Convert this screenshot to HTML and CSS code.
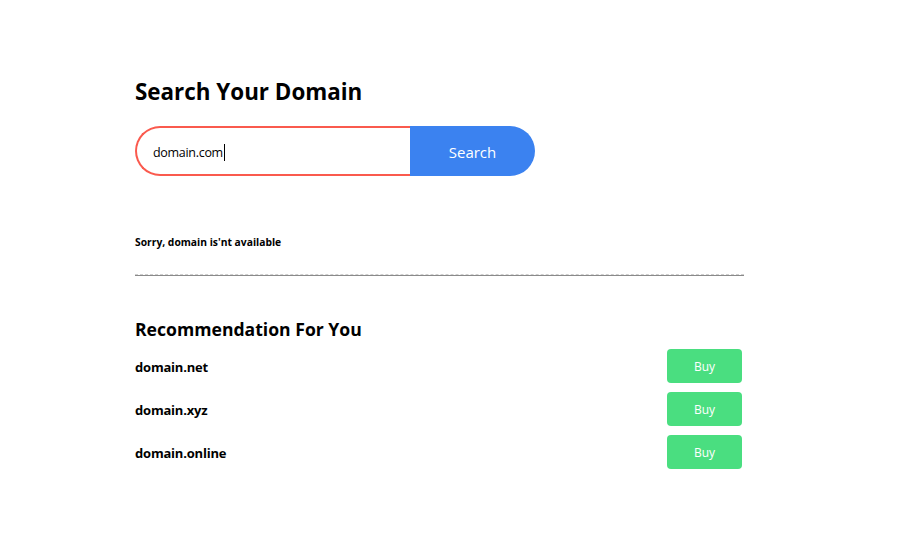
FILE: index.html
```html
<!DOCTYPE html>
<html>
<head>
<meta charset="utf-8">
<link rel="stylesheet" href="styles.css">
</head>
<body>
<main class="container">
  <h1 class="title">Search Your Domain</h1>
  <form class="search">
    <div class="search-input">domain.com<span class="caret"></span></div>
    <button type="button" class="search-btn">Search</button>
  </form>
  <p class="status">Sorry, domain is'nt available</p>
  <hr class="divider">
  <h2 class="subtitle">Recommendation For You</h2>
  <ul class="list">
    <li class="row"><span class="name">domain.net</span><button type="button" class="buy">Buy</button></li>
    <li class="row"><span class="name">domain.xyz</span><button type="button" class="buy">Buy</button></li>
    <li class="row"><span class="name">domain.online</span><button type="button" class="buy">Buy</button></li>
  </ul>
</main>
</body>
</html>
```
FILE: styles.css
```css
* { box-sizing: border-box; }
body {
  margin: 0;
  background: #fff;
  font-family: "Open Sans", "Noto Sans", sans-serif;
  color: #000;
}
.container {
  width: 609px;
  margin-left: 135px;
  padding-top: 77px;
}
.title {
  margin: 0;
  font-size: 22.4px;
  font-weight: 700;
  line-height: 30px;
}
.search {
  display: flex;
  margin-top: 19px;
  width: 400px;
  height: 50px;
}
.search-input {
  width: 275px;
  height: 50px;
  border: 2px solid #fa5a4e;
  border-right: none;
  border-radius: 25px 0 0 25px;
  padding-left: 16px;
  padding-top: 2px;
  display: flex;
  align-items: center;
  font-size: 12.5px;
  letter-spacing: -0.3px;
}
.caret {
  display: inline-block;
  width: 1px;
  height: 17px;
  background: #000;
  margin-left: 1px;
}
.search-btn {
  width: 125px;
  height: 50px;
  border: none;
  background: #3b82f0;
  color: #fff;
  border-radius: 0 25px 25px 0;
  font-family: inherit;
  font-size: 15px;
  padding: 2px 0 0 0;
}
.status {
  margin: 59px 0 0;
  font-size: 10.3px;
  font-weight: 700;
  line-height: 14px;
}
.divider {
  margin: 25px 0 0;
  border: none;
  border-top: 1px dashed #cfcfcf;
  border-bottom: 1px solid #8a8a8a;
  height: 0;
}
.subtitle {
  margin: 41px 0 0;
  font-size: 17.6px;
  font-weight: 700;
  line-height: 24px;
}
.list {
  list-style: none;
  margin: 8px 0 0;
  padding: 0;
  display: flex;
  flex-direction: column;
  gap: 9px;
}
.row {
  display: flex;
  justify-content: space-between;
  align-items: center;
  height: 34px;
}
.name {
  font-size: 13px;
  font-weight: 700;
  letter-spacing: -0.2px;
  padding-top: 1px;
}
.buy {
  width: 75px;
  height: 34px;
  margin-right: 2px;
  border: none;
  border-radius: 4px;
  background: #4ade80;
  color: #fff;
  font-family: inherit;
  font-size: 12px;
}
```
